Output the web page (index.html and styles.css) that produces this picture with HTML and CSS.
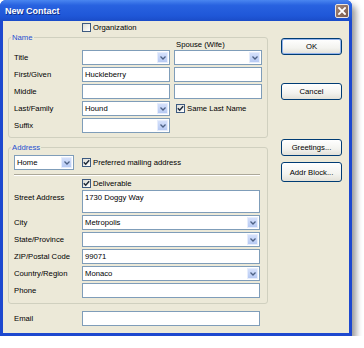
FILE: index.html
```html
<!DOCTYPE html>
<html lang="en">
<head>
    <meta charset="UTF-8">
    <title>New Contact</title>
    <link rel="stylesheet" href="styles.css">
</head>
<body>
    <div class="window">
        <div class="titlebar">
            <span class="title">New Contact</span>
            <button class="close">
                <svg width="8" height="8" viewBox="0 0 8 8"><path d="M1 1 L7 7 M7 1 L1 7" stroke="#fff" stroke-width="1.8" stroke-linecap="square"/></svg>
            </button>
        </div>

        <div class="client">
            <div class="form">
                <label class="check org"><span class="box"></span>Organization</label>

                <fieldset class="group name-group">
                    <legend>Name</legend>
                    <div class="name-grid">
                        <span></span><span></span><span class="spouse-head">Spouse (Wife)</span>

                        <span class="lbl">Title</span>
                        <div class="field combo"><span class="arrow"><svg width="6" height="4" viewBox="0 0 6 4"><path d="M0.5 0.5 L3 3 L5.5 0.5" fill="none" stroke="#4D6185" stroke-width="1.3"/></svg></span></div>
                        <div class="field combo"><span class="arrow"><svg width="6" height="4" viewBox="0 0 6 4"><path d="M0.5 0.5 L3 3 L5.5 0.5" fill="none" stroke="#4D6185" stroke-width="1.3"/></svg></span></div>

                        <span class="lbl">First/Given</span>
                        <div class="field">Huckleberry</div>
                        <div class="field"></div>

                        <span class="lbl">Middle</span>
                        <div class="field"></div>
                        <div class="field"></div>

                        <span class="lbl">Last/Family</span>
                        <div class="field combo">Hound<span class="arrow"><svg width="6" height="4" viewBox="0 0 6 4"><path d="M0.5 0.5 L3 3 L5.5 0.5" fill="none" stroke="#4D6185" stroke-width="1.3"/></svg></span></div>
                        <label class="check same"><span class="box checked"><svg width="7" height="7" viewBox="0 0 7 7"><path d="M0.8 3.2 L2.7 5.2 L6.2 1.2" fill="none" stroke="#1E2A3A" stroke-width="1.5"/></svg></span>Same Last Name</label>

                        <span class="lbl">Suffix</span>
                        <div class="field combo"><span class="arrow"><svg width="6" height="4" viewBox="0 0 6 4"><path d="M0.5 0.5 L3 3 L5.5 0.5" fill="none" stroke="#4D6185" stroke-width="1.3"/></svg></span></div>
                        <span></span>
                    </div>
                </fieldset>

                <fieldset class="group addr-group">
                    <legend>Address</legend>
                    <div class="addr-grid">
                        <div class="field combo home">Home<span class="arrow"><svg width="6" height="4" viewBox="0 0 6 4"><path d="M0.5 0.5 L3 3 L5.5 0.5" fill="none" stroke="#4D6185" stroke-width="1.3"/></svg></span></div>
                        <label class="check"><span class="box checked"><svg width="7" height="7" viewBox="0 0 7 7"><path d="M0.8 3.2 L2.7 5.2 L6.2 1.2" fill="none" stroke="#1E2A3A" stroke-width="1.5"/></svg></span>Preferred mailing address</label>

                        <div class="separator"></div>

                        <span></span>
                        <label class="check deliv"><span class="box checked"><svg width="7" height="7" viewBox="0 0 7 7"><path d="M0.8 3.2 L2.7 5.2 L6.2 1.2" fill="none" stroke="#1E2A3A" stroke-width="1.5"/></svg></span>Deliverable</label>

                        <span class="lbl top">Street Address</span>
                        <div class="field multi">1730 Doggy Way</div>

                        <span class="lbl">City</span>
                        <div class="field combo">Metropolis<span class="arrow"><svg width="6" height="4" viewBox="0 0 6 4"><path d="M0.5 0.5 L3 3 L5.5 0.5" fill="none" stroke="#4D6185" stroke-width="1.3"/></svg></span></div>

                        <span class="lbl">State/Province</span>
                        <div class="field combo"><span class="arrow"><svg width="6" height="4" viewBox="0 0 6 4"><path d="M0.5 0.5 L3 3 L5.5 0.5" fill="none" stroke="#4D6185" stroke-width="1.3"/></svg></span></div>

                        <span class="lbl">ZIP/Postal Code</span>
                        <div class="field">99071</div>

                        <span class="lbl">Country/Region</span>
                        <div class="field combo">Monaco<span class="arrow"><svg width="6" height="4" viewBox="0 0 6 4"><path d="M0.5 0.5 L3 3 L5.5 0.5" fill="none" stroke="#4D6185" stroke-width="1.3"/></svg></span></div>

                        <span class="lbl">Phone</span>
                        <div class="field"></div>
                    </div>
                </fieldset>

                <div class="email-row">
                    <span class="lbl">Email</span>
                    <div class="field"></div>
                </div>
            </div>

            <div class="buttons">
                <button class="btn default ok">OK</button>
                <button class="btn cancel">Cancel</button>
                <button class="btn greet">Greetings...</button>
                <button class="btn addr">Addr Block...</button>
            </div>
        </div>
    </div>
</body>
</html>
```

FILE: styles.css
```css
* {
    margin: 0;
    padding: 0;
    box-sizing: border-box;
}

body {
    background: #ffffff;
    font-family: "Liberation Sans", Arial, sans-serif;
    font-size: 7.7px;
    color: #000;
}

.window {
    width: 352px;
    height: 336px;
    background: #1D48CF;
    border-radius: 6px 6px 0 0;
    box-shadow: 4px 5px 6px rgba(0, 0, 0, 0.4);
    display: flex;
    flex-direction: column;
}

.titlebar {
    height: 21px;
    display: flex;
    align-items: center;
    justify-content: space-between;
    padding: 0 3px 0 5px;
    background: linear-gradient(#4A86F0, #2862E0 25%, #1F57D8 75%, #1A4CC8);
    border-radius: 6px 6px 0 0;
}

.title {
    color: #fff;
    font-weight: bold;
    font-size: 9px;
    text-shadow: 1px 1px 0 #0F2F8A;
}

.close {
    width: 14px;
    height: 14px;
    border: 1px solid #EDE6E0;
    border-radius: 2px;
    background: linear-gradient(135deg, #A48676, #7A5A4C);
    display: flex;
    align-items: center;
    justify-content: center;
}

.client {
    flex: 1;
    margin: 0 3px 3px;
    background: #ECE9D8;
    display: grid;
    grid-template-columns: 260px 61px;
    column-gap: 13px;
    padding: 1px 7px 0 5px;
    align-items: start;
}

/* checkboxes */
.check {
    display: flex;
    align-items: center;
    gap: 2px;
    white-space: nowrap;
}

.box {
    width: 9px;
    height: 9px;
    border: 1px solid #3D5A80;
    background: linear-gradient(135deg, #DCDCD5, #ffffff);
    display: flex;
    align-items: center;
    justify-content: center;
    flex-shrink: 0;
}

.org {
    margin-left: 74px;
    height: 10px;
}

/* group boxes */
.group {
    border: 1px solid #D0D0BF;
    border-radius: 3px;
    min-width: 0;
}

.group legend {
    line-height: 9px;
    height: 9px;
    color: #1F4FD0;
    padding: 0 1px;
    margin-left: -3px;
}

.name-group {
    margin-top: 1px;
    padding: 0 5px 4px 5px;
}

.name-grid {
    display: grid;
    grid-template-columns: 64px 88px 88px;
    gap: 2px 4px;
}

.spouse-head {
    height: 6px;
    line-height: 6px;
    padding-left: 2px;
}

.lbl {
    line-height: 15px;
    align-self: center;
}

.lbl.top {
    align-self: start;
}

.same {
    padding-left: 2px;
}

.addr-group {
    margin-top: 5px;
    padding: 3px 7px 5px 5px;
}

.addr-grid {
    display: grid;
    grid-template-columns: 64px 178px;
    gap: 2px 4px;
}

.separator {
    grid-column: 1 / -1;
    height: 2px;
    margin-top: 2px;
    border-top: 1px solid #ACA899;
    border-bottom: 1px solid #ffffff;
}

.deliv {
    height: 10px;
}

.email-row {
    display: grid;
    grid-template-columns: 64px 178px;
    gap: 4px;
    margin-top: 7px;
    padding-left: 6px;
}

/* text fields and combos */
.field {
    height: 15px;
    border: 1px solid #7F9DB9;
    background: #fff;
    display: flex;
    align-items: center;
    padding-left: 2px;
    white-space: nowrap;
}

.field.multi {
    height: 23px;
    align-items: flex-start;
    line-height: 13px;
}

.combo .arrow {
    margin-left: auto;
    width: 11px;
    height: 11px;
    margin-right: 1px;
    background: linear-gradient(#D4E0FB, #B7CAF3);
    border: 1px solid #E6EDFC;
    display: flex;
    align-items: center;
    justify-content: center;
}

.home {
    width: 60px;
}

/* buttons */
.buttons {
    display: flex;
    flex-direction: column;
}

.btn {
    height: 17px;
    border: 1px solid #003C74;
    border-radius: 3px;
    background: linear-gradient(#FFFFFF, #F3F3EF 60%, #E3E1D8);
    font: inherit;
    color: #000;
    display: flex;
    align-items: center;
    justify-content: center;
}

.btn.default {
    box-shadow: inset 0 0 0 1px #94B4EC;
}

.ok { margin-top: 16px; }
.cancel { margin-top: 28px; }
.greet { margin-top: 39px; }
.addr { margin-top: 6px; height: 20px; }
```
